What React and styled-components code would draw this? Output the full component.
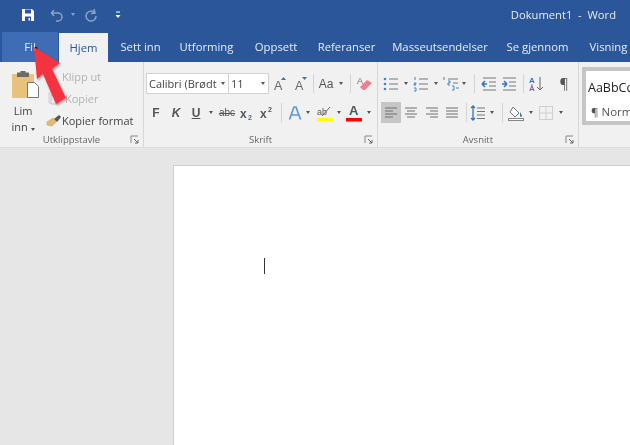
import React from 'react';
import styled, { createGlobalStyle } from 'styled-components';

const Global = createGlobalStyle`
  html, body { margin: 0; padding: 0; }
  body { width: 630px; height: 445px; overflow: hidden; background: #e6e6e6; font-family: "Open Sans", "Liberation Sans", sans-serif; }
`;
const Shell = styled.div`
  position: relative; width: 630px; height: 445px; overflow: hidden;
  display: flex; flex-direction: column; filter: blur(0.45px);
`;
const TitleBar = styled.header`
  height: 32px; box-sizing: border-box; background: #2b579a; color: #e4ebf5; display: flex; align-items: center; flex: none;
  padding: 0 14px 3px 20px; font-size: 11.2px;
`;
const Quick = styled.div`
  width: ${p => p.$w}px; display: flex; align-items: center; justify-content: center; flex: none;
  opacity: ${p => p.$dim ? 0.45 : 1}; margin-left: ${p => p.$ml || 0}px;
`;
const Title = styled.div`margin-left: auto; white-space: pre;`;
const TabBar = styled.nav`
  height: 30px; background: #2b579a; display: flex; align-items: stretch; flex: none; padding-left: 2px; overflow: hidden;
`;
const Tab = styled.div`
  width: ${p => p.$w}px; flex: none; display: flex; align-items: center; justify-content: center; box-sizing: border-box;
  font-size: 11.3px; padding-bottom: ${p => p.$active ? 1 : 2}px; white-space: nowrap;
  color: ${p => p.$active ? '#2b579a' : '#e6ecf6'};
  background: ${p => p.$active ? '#f1f1f1' : p.$file ? '#3e6db5' : 'transparent'};
  margin-left: ${p => p.$ml || 0}px; margin-top: ${p => p.$active ? 1 : 0}px;
`;
const Ribbon = styled.section`
  height: 86px; box-sizing: border-box; background: #f1f1f1; border-bottom: 1px solid #dcdcdc; display: flex; flex: none; overflow: hidden;
`;
const Group = styled.div`
  width: ${p => p.$w}px; flex: none; display: flex; flex-direction: column; position: relative;
  border-right: 1px solid #d6d6d6; box-sizing: border-box;
`;
const GroupBody = styled.div`flex: 1; min-height: 0; display: flex;`;
const GroupLabel = styled.div`
  height: 13px; flex: none; display: flex; align-items: center; justify-content: center;
  font-size: 9.5px; color: #666; position: relative; padding-bottom: 1px;
`;
const Launcher = styled.svg`position: absolute; right: 4px; top: 2px;`;
const Paste = styled.div`
  width: 46px; flex: none; display: flex; flex-direction: column; align-items: center; padding: 9px 0 0 0;
  font-size: 11px; line-height: 16px; color: #444; text-align: center;
`;
const PasteIcon = styled.div`margin-left: 8px; height: 30px;`;
const PasteLabel = styled.div`margin-top: 2px;`;
const ClipList = styled.div`display: flex; flex-direction: column; padding: 3px 0 0 0;`;
const ClipRow = styled.div`
  height: 22px; display: flex; align-items: center; gap: ${p => p.$gap ?? 2}px; font-size: 11px; white-space: nowrap;
  color: ${p => p.$off ? '#b3b3b3' : '#444'}; padding-left: ${p => p.$pl || 0}px;
`;
const Stack = styled.div`display: flex; flex-direction: column; padding: ${p => p.$pt}px 0 0 ${p => p.$pl}px; gap: ${p => p.$gap}px;`;
const Row = styled.div`display: flex; align-items: center; height: ${p => p.$h || 21}px;`;
const Cell = styled.div`
  width: ${p => p.$w}px; height: ${p => p.$h || 21}px; flex: none; display: flex; align-items: center; justify-content: center;
  background: ${p => p.$on ? '#c6c6c6' : 'transparent'}; color: #555; font-size: ${p => p.$fs || 12}px;
  font-weight: ${p => p.$bold ? 700 : 400}; font-style: ${p => p.$it ? 'italic' : 'normal'};
  text-decoration: ${p => p.$u ? 'underline' : p.$s ? 'line-through' : 'none'};
  font-family: ${p => p.$sans ? '"Liberation Sans", sans-serif' : 'inherit'};
  margin-left: ${p => p.$ml || 0}px;
`;
const Sep = styled.div`width: 1px; height: 19px; background: #d4d4d4; flex: none; margin: 0 ${p => p.$r ?? 6}px 0 ${p => p.$l ?? 6}px;`;
const Field = styled.div`
  width: ${p => p.$w}px; height: 21px; box-sizing: border-box; flex: none; background: #fff; border: 1px solid #d2d2d2;
  display: flex; align-items: center; justify-content: space-between; font-size: 11px; color: #444;
  padding: 0 3px 0 2px; margin-left: -1px; white-space: nowrap; overflow: hidden;
`;
const Caret = styled.span`
  width: 0; height: 0; flex: none; border: 2.5px solid transparent; border-top: 3px solid ${p => p.$light ? '#fff' : '#555'}; border-bottom: 0;
  display: inline-block;
`;
const Gallery = styled.div`
  margin: 5px 0 0 3px; flex: 1; height: 58px; box-sizing: border-box; background: #fff;
  border: 4px solid #c6c6c6; border-right: 0; color: #333; overflow: hidden;
  display: flex; flex-direction: column; padding: 8px 0 0 2px; white-space: nowrap;
`;
const Sample = styled.div`font-size: 12.5px; line-height: 18px; color: #222;`;
const SampleName = styled.div`font-size: 11.5px; line-height: 16px; margin-top: 7px; color: #555; padding-left: 3px;`;
const Workspace = styled.main`flex: 1; min-height: 0; display: flex; padding: 17px 0 0 173px; background: #e6e6e6;`;
const Doc = styled.div`
  flex: 1; background: #fff; border: 1px solid #cfcfcf; border-right: 0; border-bottom: 0; padding: 92px 0 0 90px;
`;
const TextCursor = styled.div`width: 1px; height: 16px; background: #333;`;
const Pointer = styled.svg`position: absolute; left: 20px; top: 35px; overflow: visible;`;

const S = ({ w = 16, h = 16, children }) => (
  <svg width={w} height={h} viewBox={`0 0 ${w} ${h}`} fill="none" style={{ overflow: 'visible' }}>{children}</svg>
);
const Launch = () => (
  <Launcher width="9" height="9" viewBox="0 0 9 9" fill="none">
    <path d="M1 8V1h7" stroke="#888" /><path d="M4 4l4 4M8 5v3H5" stroke="#666" />
  </Launcher>
);
const Lines = ({ d, color = '#777' }) => <path d={d} stroke={color} strokeWidth="1" />;
const Bullets = () => (
  <S>
    <circle cx="2" cy="3" r="1.3" fill="#3d85c6" /><circle cx="2" cy="8" r="1.3" fill="#3d85c6" /><circle cx="2" cy="13" r="1.3" fill="#3d85c6" />
    <Lines d="M6 3h9M6 8h9M6 13h9" />
  </S>
);
const Numbers = () => (
  <S>
    <path d="M2 1v3M1 7h2v1H1v1h2M1 12h2v3H1" stroke="#3d85c6" />
    <Lines d="M6 3h9M6 8h9M6 13h9" />
  </S>
);
const Multi = () => (
  <S>
    <path d="M1 1v3M5 5h2v2H5v2h2M9 10h2v4H9" stroke="#3d85c6" />
    <Lines d="M5 3h10M10 7h5M13 12h3" />
  </S>
);
const Indent = ({ rev }) => (
  <S>
    <Lines d="M2 2h13M8 6h7M8 10h7M2 14h13" />
    <path d={rev ? 'M6 8H1M1 8l3-3M1 8l3 3' : 'M1 8h5M6 8L3 5M6 8l-3 3'} stroke="#2f75c0" strokeWidth="1.5" />
  </S>
);
const Sort = () => (
  <S w={16}>
    <text x="0" y="7" fontSize="8" fontWeight="700" fill="#2f75c0" fontFamily="Liberation Sans">A</text>
    <text x="0" y="15" fontSize="8" fontWeight="700" fill="#8a5bb5" fontFamily="Liberation Sans">Å</text>
    <path d="M11 1v13M8 11l3 3 3-3" stroke="#666" />
  </S>
);
const Align = ({ d }) => <S><Lines d={d} color="#6f6f6f" /></S>;
const Spacing = () => (
  <S>
    <path d="M3 1v14M1 3l2-2 2 2M1 13l2 2 2-2" stroke="#2f75c0" strokeWidth="1.3" />
    <Lines d="M7 3h8M7 6.500h8M7 10h8M7 13.500h8" />
  </S>
);
const Shading = () => (
  <S w={18}>
    <path d="M6 2l6 6-4 4-5-5z" stroke="#777" fill="#fff" /><path d="M13 7c1 2 2 3 2 4s-2 1-2 0 0-2 0-4z" fill="#2f75c0" />
    <rect x="1.500" y="13.500" width="15" height="2" fill="#fff" stroke="#888" />
  </S>
);
const Borders = () => (
  <S><rect x="1.500" y="1.500" width="13" height="13" stroke="#cfcfcf" /><path d="M8 2v12M2 8h12" stroke="#cfcfcf" /></S>
);
const Eraser = () => (
  <S w={16}>
    <text x="0" y="8" fontSize="9" fill="#777" fontFamily="Liberation Sans">A</text>
    <path d="M3 11l7-7 5 3-7 7H6z" fill="#ee7f8e" />
  </S>
);
const GrowA = ({ down }) => (
  <S w={14} h={14}>
    <text x="1" y="13" fontSize="12.5" fill="#666" fontFamily="Liberation Sans">A</text>
    <path d={down ? 'M8 0h5l-2.500 3z' : 'M8 3h5l-2.500-3z'} fill="#2f75c0" />
  </S>
);
const Script = ({ up }) => (
  <S w={14}>
    <text x="0" y="13" fontSize="12" fontWeight="700" fill="#555" fontFamily="Liberation Sans">x</text>
    <text x="8" y={up ? 7 : 15} fontSize="7" fontWeight="700" fill={up ? '#555' : '#2f75c0'} fontFamily="Liberation Sans">2</text>
  </S>
);
const TextEffect = () => (
  <S w={14} h={16}>
    <path d="M1.500 14.500L6 2h2l4.500 12.500M4 10h6" stroke="#5b9bd5" strokeWidth="1.7" />
  </S>
);
const ColorA = ({ label, bar, fontSize = 13, stroke }) => (
  <S w={16} h={18}>
    <text x={label.length > 1 ? 0 : 3} y="11" fontSize={fontSize} fontWeight={label.length > 1 ? 400 : 700} fill="#555" fontFamily="Liberation Sans">{label}</text>
    {stroke && <path d="M5 12l8-9" stroke="#666" />}
    <rect x="0" y="14" width="16" height="3.500" fill={bar} />
  </S>
);
const Save = () => (
  <S>
    <path d="M2 2h10l2 2v10H2z" fill="#fff" />
    <rect x="5" y="2.500" width="6" height="4" fill="#2b579a" />
    <rect x="5" y="9.500" width="6" height="4.500" fill="#2b579a" />
    <rect x="8.500" y="11" width="1.500" height="2.500" fill="#fff" />
  </S>
);
const Undo = () => (
  <S w={14} h={14}><path d="M4 2L1.500 5 4 8M2 5h6a4 4 0 0 1 0 8H6" stroke="#fff" strokeWidth="1.5" /></S>
);
const Redo = () => (
  <S w={14} h={14}><path d="M10 1l1 4-4 .5M10.500 4.500A5 5 0 1 0 12 8" stroke="#fff" strokeWidth="1.500" /></S>
);
const Customize = () => (
  <S w={6} h={8}><path d="M1 1h4" stroke="#fff" /><path d="M.5 4h5L3 7z" fill="#fff" /></S>
);
const Clipboard = () => (
  <S w={30} h={30}>
    <rect x="0" y="3" width="22" height="24" rx="1" fill="#e7c27c" />
    <rect x="5" y="1.500" width="12" height="4.500" fill="#6b6b6b" />
    <rect x="8.500" y="0" width="5" height="3" fill="#6b6b6b" />
    <path d="M15.500 11.500h7l4 4v11h-11z" fill="#fff" stroke="#777" />
  </S>
);
const CopyIcon = () => <S w={14} h={14}><path d="M3 2h6v10H3z" stroke="#ccc" /><path d="M5 4h6l1 1v8H5z" fill="#eee" stroke="#c4c4c4" /></S>;
const Brush = () => (
  <S w={16} h={14}>
    <path d="M1 9l6-4 3 4-4 4-5-1z" fill="#e5bb6a" stroke="#c79a46" strokeWidth=".5" />
    <path d="M8 6l5-4 2 2-4 5z" fill="#555" />
  </S>
);

const tabs = [
  ['Sett inn', 65], ['Utforming', 67], ['Oppsett', 72], ['Referanser', 69], ['Masseutsendelser', 118], ['Se gjennom', 77], ['Visning', 65],
];

export default function App() {
  return (
    <Shell>
      <Global />
      <TitleBar>
        <Quick $w={16}><Save /></Quick>
        <Quick $w={14} $dim $ml={14}><Undo /></Quick>
        <Quick $w={14} $dim $ml={2}><Caret $light /></Quick>
        <Quick $w={14} $dim $ml={4}><Redo /></Quick>
        <Quick $w={8} $ml={16}><Customize /></Quick>
        <Title>Dokument1  -  Word</Title>
      </TitleBar>
      <TabBar>
        <Tab $file $w={56}>Fil</Tab>
        <Tab $active $w={49} $ml={1}>Hjem</Tab>
        {tabs.map(([t, w]) => <Tab key={t} $w={w}>{t}</Tab>)}
      </TabBar>
      <Ribbon>
        <Group $w={144}>
          <GroupBody>
            <Paste>
              <PasteIcon><Clipboard /></PasteIcon>
              <PasteLabel>Lim<br />inn <Caret /></PasteLabel>
            </Paste>
            <ClipList>
              <ClipRow $off $pl={16}>Klipp ut</ClipRow>
              <ClipRow $off $gap={5}><CopyIcon />Kopier</ClipRow>
              <ClipRow $gap={0}><Brush />Kopier format</ClipRow>
            </ClipList>
          </GroupBody>
          <GroupLabel>Utklippstavle<Launch /></GroupLabel>
        </Group>

        <Group $w={234}>
          <GroupBody>
            <Stack $pt={11} $pl={3} $gap={8}>
              <Row>
                <Field $w={83}>Calibri (Brødt<Caret /></Field>
                <Field $w={41}>11<Caret /></Field>
                <Cell $w={22}><GrowA /></Cell>
                <Cell $w={20}><GrowA down /></Cell>
                <Sep $l={2} $r={0} />
                <Cell $w={24} $sans $fs={12}>Aa</Cell>
                <Cell $w={6}><Caret /></Cell>
                <Sep $l={6} $r={5} />
                <Cell $w={18}><Eraser /></Cell>
              </Row>
              <Row>
                <Cell $w={18} $bold $sans>F</Cell>
                <Cell $w={22} $bold $it $sans>K</Cell>
                <Cell $w={18} $bold $u $sans>U</Cell>
                <Cell $w={12}><Caret /></Cell>
                <Cell $w={20} $s $sans $fs={10}>abc</Cell>
                <Cell $w={20}><Script /></Cell>
                <Cell $w={20}><Script up /></Cell>
                <Sep $l={4} $r={3} />
                <Cell $w={20}><TextEffect /></Cell>
                <Cell $w={5}><Caret /></Cell>
                <Cell $w={18} $ml={6}><ColorA label="ab" bar="#ffff00" fontSize={9} stroke /></Cell>
                <Cell $w={10}><Caret /></Cell>
                <Cell $w={20}><ColorA label="A" bar="#ff0000" /></Cell>
                <Cell $w={10}><Caret /></Cell>
              </Row>
            </Stack>
          </GroupBody>
          <GroupLabel>Skrift<Launch /></GroupLabel>
        </Group>

        <Group $w={201}>
          <GroupBody>
            <Stack $pt={11} $pl={3} $gap={8}>
              <Row>
                <Cell $w={20}><Bullets /></Cell>
                <Cell $w={10}><Caret /></Cell>
                <Cell $w={20}><Numbers /></Cell>
                <Cell $w={10}><Caret /></Cell>
                <Cell $w={20}><Multi /></Cell>
                <Cell $w={6}><Caret /></Cell>
                <Sep $l={7} $r={5} />
                <Cell $w={18}><Indent rev /></Cell>
                <Cell $w={22}><Indent /></Cell>
                <Sep $l={3} $r={3} />
                <Cell $w={20}><Sort /></Cell>
                <Cell $w={20} $fs={14} $ml={7}>¶</Cell>
              </Row>
              <Row>
                <Cell $on $w={20}><Align d="M2 3h12M2 6h8M2 9h12M2 12h8" /></Cell>
                <Cell $w={20}><Align d="M2 3h12M4 6h8M2 9h12M4 12h8" /></Cell>
                <Cell $w={22}><Align d="M2 3h12M6 6h8M2 9h12M6 12h8" /></Cell>
                <Cell $w={18}><Align d="M2 3h12M2 6h12M2 9h12M2 12h12" /></Cell>
                <Sep $l={5} $r={0} />
                <Cell $w={22}><Spacing /></Cell>
                <Cell $w={6}><Caret /></Cell>
                <Sep $l={7} $r={3} />
                <Cell $w={20}><Shading /></Cell>
                <Cell $w={10}><Caret /></Cell>
                <Cell $w={20}><Borders /></Cell>
                <Cell $w={10}><Caret /></Cell>
              </Row>
            </Stack>
          </GroupBody>
          <GroupLabel>Avsnitt<Launch /></GroupLabel>
        </Group>

        <Gallery>
          <Sample>AaBbCc</Sample>
          <SampleName>¶ Norm</SampleName>
        </Gallery>
      </Ribbon>
      <Workspace>
        <Doc><TextCursor /></Doc>
      </Workspace>
      <Pointer width="50" height="72" viewBox="0 0 50 72">
        <defs>
          <filter id="sh" x="-20%" y="-20%" width="150%" height="150%">
            <feDropShadow dx="1" dy="1.500" stdDeviation="1.200" floodColor="#000" floodOpacity="0.35" />
          </filter>
        </defs>
        <path d="M15 12l2 0 1 4-3-2z" fill="#111" />
        <path d="M14 12L40 28 32 34 46 63 36 69 23 39 17 44z" fill="#f5333f" filter="url(#sh)" />
      </Pointer>
    </Shell>
  );
}
